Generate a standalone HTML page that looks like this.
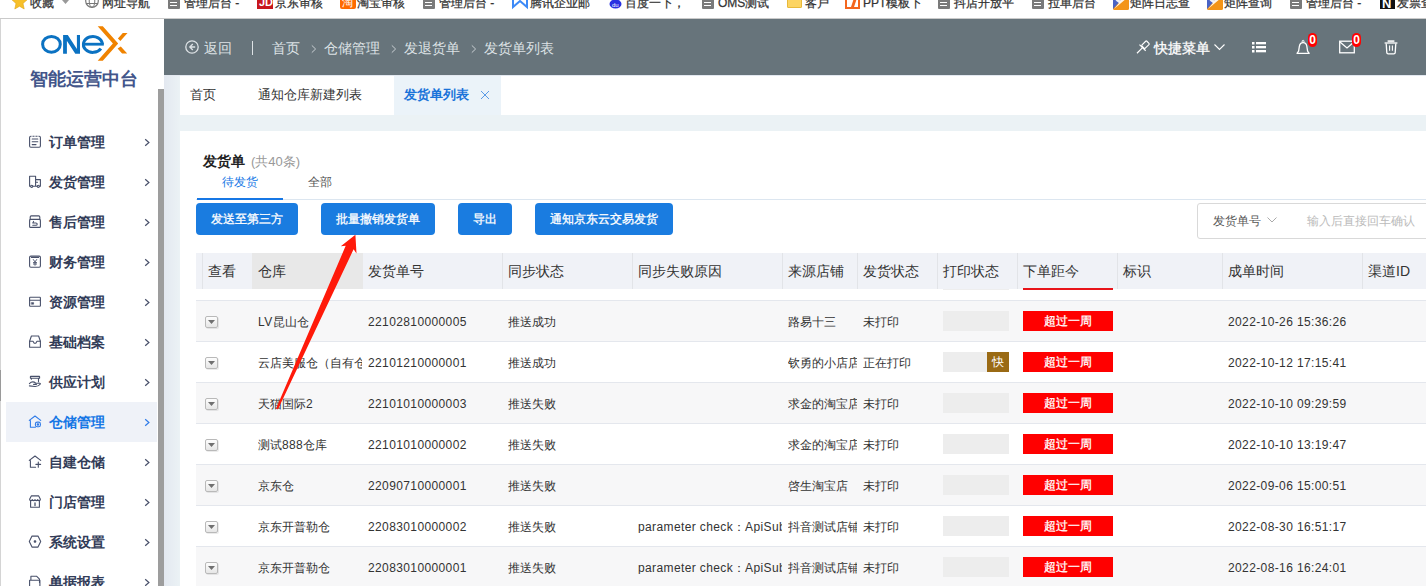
<!DOCTYPE html>
<html><head><meta charset="utf-8"><style>
*{margin:0;padding:0;box-sizing:border-box}
html,body{width:1426px;height:586px;overflow:hidden;background:#fff}
body{position:relative;font-family:"Liberation Sans", sans-serif;color:#333}
.ab{position:absolute}
.t{position:absolute;white-space:nowrap;line-height:1}
svg{position:absolute;overflow:visible}
</style></head><body>

<div class="ab" style="left:0;top:0;width:1426px;height:18px;background:#fff;overflow:hidden">
<svg style="left:12px;top:-6px" width="15" height="17" viewBox="0 0 15 17"><path d="M7.5 0 L9.8 5.2 L15 5.8 L11 9.5 L12.2 15 L7.5 12.2 L2.8 15 L4 9.5 L0 5.8 L5.2 5.2Z" fill="#f7c02a" stroke="#e0a210" stroke-width="0.6"/></svg>
<svg style="left:62px;top:0px" width="7" height="5" viewBox="0 0 7 5"><path d="M0 0 L7 0 L3.5 4Z" fill="#999"/></svg>
<div class="t" style="left:30px;top:-3px;font-size:12px;color:#333;-webkit-text-stroke:0.25px #333">收藏</div>
<svg style="left:85px;top:-6px" width="14" height="15" viewBox="0 0 14 15"><circle cx="7" cy="7" r="6.3" fill="none" stroke="#777" stroke-width="1.2"/><ellipse cx="7" cy="7" rx="2.8" ry="6.3" fill="none" stroke="#777" stroke-width="1"/><path d="M1 9.5H13" stroke="#777" stroke-width="1"/></svg>
<div class="t" style="left:102px;top:-3px;font-size:12px;color:#333;-webkit-text-stroke:0.25px #333">网址导航</div>
<div class="ab" style="left:168px;top:-6px;width:12px;height:15px;background:#7a7a7a;border-radius:1px"></div>
<div class="ab" style="left:170px;top:2px;width:7px;height:1.3px;background:#fff"></div>
<div class="ab" style="left:170px;top:5px;width:7px;height:1.3px;background:#fff"></div>
<div class="t" style="left:184px;top:-3px;font-size:12px;color:#333;-webkit-text-stroke:0.25px #333">管理后台 -</div>
<div class="ab" style="left:257px;top:-7px;width:16px;height:16px;background:#c8161d"></div>
<div class="t" style="left:259px;top:-3px;font-size:11px;font-weight:bold;color:#fff">JD</div>
<div class="t" style="left:275px;top:-3px;font-size:12px;color:#333;-webkit-text-stroke:0.25px #333">京东审核</div>
<div class="ab" style="left:340px;top:-7px;width:16px;height:16px;background:#ff6a00;border-radius:2px"></div>
<div class="t" style="left:342px;top:-3px;font-size:11px;color:#fff">淘</div>
<div class="t" style="left:357px;top:-3px;font-size:12px;color:#333;-webkit-text-stroke:0.25px #333">淘宝审核</div>
<div class="ab" style="left:423px;top:-6px;width:12px;height:15px;background:#7a7a7a;border-radius:1px"></div>
<div class="ab" style="left:425px;top:2px;width:7px;height:1.3px;background:#fff"></div>
<div class="ab" style="left:425px;top:5px;width:7px;height:1.3px;background:#fff"></div>
<div class="t" style="left:439px;top:-3px;font-size:12px;color:#333;-webkit-text-stroke:0.25px #333">管理后台 -</div>
<svg style="left:512px;top:-6px" width="16" height="15" viewBox="0 0 16 15"><path d="M1 1 L1 13 L8 7 L15 13 L15 1" fill="none" stroke="#3d8af7" stroke-width="2"/></svg>
<div class="t" style="left:530px;top:-3px;font-size:12px;color:#333;-webkit-text-stroke:0.25px #333">腾讯企业邮</div>
<svg style="left:609px;top:-6px" width="13" height="15" viewBox="0 0 13 15"><ellipse cx="6.5" cy="10" rx="6" ry="4.5" fill="#2932e1"/><circle cx="2" cy="3" r="1.8" fill="#2932e1"/><circle cx="5" cy="1" r="1.8" fill="#2932e1"/><circle cx="8" cy="1" r="1.8" fill="#2932e1"/><circle cx="11" cy="3" r="1.8" fill="#2932e1"/><text x="3" y="13" font-size="6" fill="#fff" font-family="Liberation Sans">du</text></svg>
<div class="t" style="left:625px;top:-3px;font-size:12px;color:#333;-webkit-text-stroke:0.25px #333">百度一下，</div>
<div class="ab" style="left:702px;top:-6px;width:12px;height:15px;background:#7a7a7a;border-radius:1px"></div>
<div class="ab" style="left:704px;top:2px;width:7px;height:1.3px;background:#fff"></div>
<div class="ab" style="left:704px;top:5px;width:7px;height:1.3px;background:#fff"></div>
<div class="t" style="left:718px;top:-3px;font-size:12px;color:#333;-webkit-text-stroke:0.25px #333">OMS测试</div>
<div class="ab" style="left:787px;top:-6px;width:15px;height:14px;background:#fcd462;border:1px solid #e8b93a;border-radius:1px"></div>
<div class="t" style="left:805px;top:-3px;font-size:12px;color:#333;-webkit-text-stroke:0.25px #333">客户</div>
<div class="ab" style="left:845px;top:-7px;width:15px;height:16px;background:#fff;border:2px solid #f4661e"></div>
<svg style="left:845px;top:-7px" width="15" height="16" viewBox="0 0 15 16"><path d="M6 14 L10 2 L13 2 L9 14Z" fill="#f4661e"/></svg>
<div class="t" style="left:863px;top:-3px;font-size:12px;color:#333;-webkit-text-stroke:0.25px #333">PPT模板下</div>
<div class="ab" style="left:938px;top:-6px;width:12px;height:15px;background:#7a7a7a;border-radius:1px"></div>
<div class="ab" style="left:940px;top:2px;width:7px;height:1.3px;background:#fff"></div>
<div class="ab" style="left:940px;top:5px;width:7px;height:1.3px;background:#fff"></div>
<div class="t" style="left:954px;top:-3px;font-size:12px;color:#333;-webkit-text-stroke:0.25px #333">抖店开放平</div>
<div class="ab" style="left:1032px;top:-6px;width:12px;height:15px;background:#7a7a7a;border-radius:1px"></div>
<div class="ab" style="left:1034px;top:2px;width:7px;height:1.3px;background:#fff"></div>
<div class="ab" style="left:1034px;top:5px;width:7px;height:1.3px;background:#fff"></div>
<div class="t" style="left:1048px;top:-3px;font-size:12px;color:#333;-webkit-text-stroke:0.25px #333">拉单后台</div>
<svg style="left:1113px;top:-5px" width="16" height="15" viewBox="0 0 16 15"><rect x="0" y="0" width="16" height="15" rx="1.5" fill="#f39418"/><path d="M0 0 H13 L0 14Z" fill="#4a63c4"/><path d="M2.5 5.5 L10 2 L6.5 5.5 L14 3 L1 14 L6 8Z" fill="#fff" opacity="0.9"/></svg>
<div class="t" style="left:1130px;top:-3px;font-size:12px;color:#333;-webkit-text-stroke:0.25px #333">矩阵日志查</div>
<svg style="left:1207px;top:-5px" width="16" height="15" viewBox="0 0 16 15"><rect x="0" y="0" width="16" height="15" rx="1.5" fill="#f39418"/><path d="M0 0 H13 L0 14Z" fill="#4a63c4"/><path d="M2.5 5.5 L10 2 L6.5 5.5 L14 3 L1 14 L6 8Z" fill="#fff" opacity="0.9"/></svg>
<div class="t" style="left:1224px;top:-3px;font-size:12px;color:#333;-webkit-text-stroke:0.25px #333">矩阵查询</div>
<div class="ab" style="left:1290px;top:-6px;width:12px;height:15px;background:#7a7a7a;border-radius:1px"></div>
<div class="ab" style="left:1292px;top:2px;width:7px;height:1.3px;background:#fff"></div>
<div class="ab" style="left:1292px;top:5px;width:7px;height:1.3px;background:#fff"></div>
<div class="t" style="left:1306px;top:-3px;font-size:12px;color:#333;-webkit-text-stroke:0.25px #333">管理后台 -</div>
<div class="ab" style="left:1380px;top:-6px;width:15px;height:15px;background:#111"></div>
<div class="t" style="left:1382px;top:-3px;font-size:13px;font-weight:bold;color:#fff">N</div>
<div class="t" style="left:1397px;top:-3px;font-size:12px;color:#333;-webkit-text-stroke:0.25px #333">发票查</div>
</div>
<div class="ab" style="left:0;top:18px;width:1426px;height:1px;background:#cacaca"></div>
<div class="ab" style="left:0;top:19px;width:164px;height:567px;background:#fff"></div>
<div class="ab" style="left:0;top:19px;width:1px;height:567px;background:#d4d4d4"></div>
<div class="ab" style="left:0;top:370px;width:1px;height:31px;background:#9a9a9a"></div>
<div class="ab" style="left:158px;top:89px;width:6px;height:497px;background:#9d9d9d"></div>
<svg style="left:0;top:0" width="164" height="100" viewBox="0 0 164 100">
<ellipse cx="51.45" cy="44.35" rx="8.85" ry="7.95" fill="none" stroke="#0b72c2" stroke-width="3"/>
<path d="M63.1 34.9 H66.9 V53.8 H63.1Z M76.9 34.9 H80 V53.8 H76.9Z M63.1 34.9 L67.8 34.9 L80 53.8 L75.3 53.8Z" fill="#0b72c2"/>
<path d="M102.3 44.2 A9.45 7.95 0 1 0 100.9 48.6" fill="none" stroke="#0b72c2" stroke-width="3"/>
<rect x="82" y="42.8" width="21.8" height="2.8" fill="#0b72c2"/>
<path d="M97.7 26.3 L102.8 26.3 L118.2 43.5 L102.8 60.7 L97.7 60.7 L112.9 43.5Z M122.8 33.1 L127.5 33.1 L120.4 41 L117.9 38.5Z M117.6 48.5 L120.8 46.4 L127.2 53.5 L122.1 53.5Z" fill="#f08300"/>
</svg>
<div class="t" style="left:30px;top:70px;font-size:18px;font-weight:bold;color:#42558a;letter-spacing:0px">智能运营中台</div>
<svg style="left:24px;top:132px" width="22" height="20" viewBox="0 0 22 20"><g fill="none" stroke="#48506a" stroke-width="1.1" stroke-linejoin="round" stroke-linecap="round"><rect x="5.6" y="4.3" width="10.8" height="11" rx="1.2"/><path d="M8.2 7H13.8 M8.2 9.8H13.8 M8.2 12.6H12"/><path d="M8 4.3V3.6 M11 4.3V3.6 M14 4.3V3.6" stroke="#fff" stroke-width="1.2"/></g></svg>
<div class="t" style="left:49px;top:135px;font-size:14px;font-weight:bold;color:#323c58">订单管理</div>
<svg style="left:144px;top:138px" width="6" height="9" viewBox="0 0 6 9"><path d="M1.2 1.2 L4.9 4.5 L1.2 7.8" fill="none" stroke="#48506a" stroke-width="1.2"/></svg>
<svg style="left:24px;top:172px" width="22" height="20" viewBox="0 0 22 20"><g fill="none" stroke="#48506a" stroke-width="1.1" stroke-linejoin="round" stroke-linecap="round"><path d="M5.6 14.2V4.3H11.6V14.2 M11.6 7.6H16.4V14.2 M11.6 10.3H13.5 M9 14.2H13 M5.6 14.2H6.4 M15.6 14.2H16.4"/><circle cx="7.7" cy="14.3" r="1.1"/><circle cx="14.3" cy="14.3" r="1.1"/></g></svg>
<div class="t" style="left:49px;top:175px;font-size:14px;font-weight:bold;color:#323c58">发货管理</div>
<svg style="left:144px;top:178px" width="6" height="9" viewBox="0 0 6 9"><path d="M1.2 1.2 L4.9 4.5 L1.2 7.8" fill="none" stroke="#48506a" stroke-width="1.2"/></svg>
<svg style="left:24px;top:212px" width="22" height="20" viewBox="0 0 22 20"><g fill="none" stroke="#48506a" stroke-width="1.1" stroke-linejoin="round" stroke-linecap="round"><path d="M6.2 7.4V5 Q6.2 3.9 7.3 3.9 H14.7 Q15.8 3.9 15.8 5 V7.4"/><rect x="5.6" y="7.4" width="10.8" height="8" rx="1"/><path d="M9.6 9.4 L8.8 11 H12 A1.1 1.1 0 0 1 12 13.3 H8.8"/></g></svg>
<div class="t" style="left:49px;top:215px;font-size:14px;font-weight:bold;color:#323c58">售后管理</div>
<svg style="left:144px;top:218px" width="6" height="9" viewBox="0 0 6 9"><path d="M1.2 1.2 L4.9 4.5 L1.2 7.8" fill="none" stroke="#48506a" stroke-width="1.2"/></svg>
<svg style="left:24px;top:252px" width="22" height="20" viewBox="0 0 22 20"><g fill="none" stroke="#48506a" stroke-width="1.1" stroke-linejoin="round" stroke-linecap="round"><rect x="5.6" y="4.1" width="10.8" height="11.2" rx="1.2"/><path d="M7.5 5.4H14.5"/><path d="M9.3 7.5 L11 9.9 L12.7 7.5 M11 9.9V13.3 M9.4 10.6H12.6 M9.4 12H12.6" stroke-width="0.9"/></g></svg>
<div class="t" style="left:49px;top:255px;font-size:14px;font-weight:bold;color:#323c58">财务管理</div>
<svg style="left:144px;top:258px" width="6" height="9" viewBox="0 0 6 9"><path d="M1.2 1.2 L4.9 4.5 L1.2 7.8" fill="none" stroke="#48506a" stroke-width="1.2"/></svg>
<svg style="left:24px;top:292px" width="22" height="20" viewBox="0 0 22 20"><g fill="none" stroke="#48506a" stroke-width="1.1" stroke-linejoin="round" stroke-linecap="round"><rect x="5.6" y="5.3" width="10.8" height="9" rx="0.6"/><path d="M5.6 8.2H16.4"/><rect x="7.6" y="10.6" width="2" height="1.6" fill="#48506a" stroke-width="0.6"/></g></svg>
<div class="t" style="left:49px;top:295px;font-size:14px;font-weight:bold;color:#323c58">资源管理</div>
<svg style="left:144px;top:298px" width="6" height="9" viewBox="0 0 6 9"><path d="M1.2 1.2 L4.9 4.5 L1.2 7.8" fill="none" stroke="#48506a" stroke-width="1.2"/></svg>
<svg style="left:24px;top:332px" width="22" height="20" viewBox="0 0 22 20"><g fill="none" stroke="#48506a" stroke-width="1.1" stroke-linejoin="round" stroke-linecap="round"><path d="M5.6 9.3 L7.4 4 H14.6 L16.4 9.3"/><path d="M5.6 9.3 V15.3 H16.4 V9.3 H13 L11.8 11.2 H10.2 L9 9.3Z"/></g></svg>
<div class="t" style="left:49px;top:335px;font-size:14px;font-weight:bold;color:#323c58">基础档案</div>
<svg style="left:144px;top:338px" width="6" height="9" viewBox="0 0 6 9"><path d="M1.2 1.2 L4.9 4.5 L1.2 7.8" fill="none" stroke="#48506a" stroke-width="1.2"/></svg>
<svg style="left:24px;top:372px" width="22" height="20" viewBox="0 0 22 20"><g fill="none" stroke="#48506a" stroke-width="1.1" stroke-linejoin="round" stroke-linecap="round"><rect x="6.4" y="4.4" width="9.2" height="1.8" rx="0.3"/><path d="M7.4 6.2V7.2 M14.5 6.2V9.6"/><path d="M5.4 11.6 Q8.5 8.5 11.8 11.2 H13.6 Q16.6 11 16.4 12 Q14.5 14.6 11 14.5 L5.4 13.9"/><path d="M9.6 12.4 H12.4"/></g></svg>
<div class="t" style="left:49px;top:375px;font-size:14px;font-weight:bold;color:#323c58">供应计划</div>
<svg style="left:144px;top:378px" width="6" height="9" viewBox="0 0 6 9"><path d="M1.2 1.2 L4.9 4.5 L1.2 7.8" fill="none" stroke="#48506a" stroke-width="1.2"/></svg>
<div class="ab" style="left:6px;top:402px;width:151px;height:40px;background:#eff2f8"></div>
<svg style="left:24px;top:412px" width="22" height="20" viewBox="0 0 22 20"><g fill="none" stroke="#2f7be8" stroke-width="1.1" stroke-linejoin="round" stroke-linecap="round"><path d="M5.3 8.4 L11 4 L16.7 8.4 M6.4 8.6 V15.2 H11.4"/><rect x="11.4" y="10.1" width="5" height="4.6" rx="1.8"/><circle cx="13.9" cy="12.4" r="0.7" fill="#2f7be8"/></g></svg>
<div class="t" style="left:49px;top:415px;font-size:14px;font-weight:bold;color:#1677e5">仓储管理</div>
<svg style="left:144px;top:418px" width="6" height="9" viewBox="0 0 6 9"><path d="M1.2 1.2 L4.9 4.5 L1.2 7.8" fill="none" stroke="#2f7be8" stroke-width="1.2"/></svg>
<svg style="left:24px;top:452px" width="22" height="20" viewBox="0 0 22 20"><g fill="none" stroke="#48506a" stroke-width="1.1" stroke-linejoin="round" stroke-linecap="round"><path d="M5.3 8.4 L11 4 L16.7 8.4 M6.4 8.6 V15.2 H11.6 M11.9 12.4 H16.6 M14.3 10 V15.2"/></g></svg>
<div class="t" style="left:49px;top:455px;font-size:14px;font-weight:bold;color:#323c58">自建仓储</div>
<svg style="left:144px;top:458px" width="6" height="9" viewBox="0 0 6 9"><path d="M1.2 1.2 L4.9 4.5 L1.2 7.8" fill="none" stroke="#48506a" stroke-width="1.2"/></svg>
<svg style="left:24px;top:492px" width="22" height="20" viewBox="0 0 22 20"><g fill="none" stroke="#48506a" stroke-width="1.1" stroke-linejoin="round" stroke-linecap="round"><path d="M7.3 3.9 H14.7 L16.4 7.3 Q16.4 8.6 15 8.6 Q13.7 8.6 13.7 7.6 Q13.7 8.6 12.3 8.6 Q11 8.6 11 7.6 Q11 8.6 9.7 8.6 Q8.3 8.6 8.3 7.6 Q8.3 8.6 7 8.6 Q5.6 8.6 5.6 7.3Z"/><path d="M6.6 8.8 V15.3 H15.4 V8.8"/><path d="M11 11 V13.6" stroke-width="1.3"/></g></svg>
<div class="t" style="left:49px;top:495px;font-size:14px;font-weight:bold;color:#323c58">门店管理</div>
<svg style="left:144px;top:498px" width="6" height="9" viewBox="0 0 6 9"><path d="M1.2 1.2 L4.9 4.5 L1.2 7.8" fill="none" stroke="#48506a" stroke-width="1.2"/></svg>
<svg style="left:24px;top:532px" width="22" height="20" viewBox="0 0 22 20"><g fill="none" stroke="#48506a" stroke-width="1.1" stroke-linejoin="round" stroke-linecap="round"><path d="M5.3 9.5 L8 4.1 H14 L16.7 9.5 L14 15.1 H8Z"/><circle cx="11" cy="9.5" r="0.8" fill="#48506a"/></g></svg>
<div class="t" style="left:49px;top:535px;font-size:14px;font-weight:bold;color:#323c58">系统设置</div>
<svg style="left:144px;top:538px" width="6" height="9" viewBox="0 0 6 9"><path d="M1.2 1.2 L4.9 4.5 L1.2 7.8" fill="none" stroke="#48506a" stroke-width="1.2"/></svg>
<svg style="left:24px;top:572px" width="22" height="20" viewBox="0 0 22 20"><g fill="none" stroke="#48506a" stroke-width="1.1" stroke-linejoin="round" stroke-linecap="round"><path d="M6.9 8 V4.2 H12.5 L15.5 7.2 V10.5 M5.6 14 V8.2 H15.9 V16"/></g></svg>
<div class="t" style="left:49px;top:575px;font-size:14px;font-weight:bold;color:#323c58">单据报表</div>
<svg style="left:144px;top:578px" width="6" height="9" viewBox="0 0 6 9"><path d="M1.2 1.2 L4.9 4.5 L1.2 7.8" fill="none" stroke="#48506a" stroke-width="1.2"/></svg>
<div class="ab" style="left:164px;top:19px;width:1262px;height:56px;background:#67747b"></div>
<svg style="left:185px;top:40px" width="14" height="14" viewBox="0 0 14 14"><circle cx="7" cy="7" r="6.2" fill="none" stroke="#dde2e5" stroke-width="1.3"/><path d="M7.8 4 L4.8 7 L7.8 10 M4.8 7 H10.2" fill="none" stroke="#dde2e5" stroke-width="1.3"/></svg>
<div class="t" style="left:204px;top:41px;font-size:14px;color:#dde2e5">返回</div>
<div class="ab" style="left:251.5px;top:41px;width:1.5px;height:14px;background:#dde2e5"></div>
<div class="t" style="left:272px;top:41px;font-size:14px;color:#dde2e5">首页</div>
<div class="t" style="left:324px;top:41px;font-size:14px;color:#dde2e5">仓储管理</div>
<div class="t" style="left:404px;top:41px;font-size:14px;color:#dde2e5">发退货单</div>
<div class="t" style="left:484px;top:41px;font-size:14px;color:#dde2e5">发货单列表</div>
<svg style="left:311px;top:45px" width="6" height="9" viewBox="0 0 6 9"><path d="M0.8 0.4 L4.6 4 L0.8 7.6" fill="none" stroke="#c9cfd3" stroke-width="1"/></svg>
<svg style="left:391px;top:45px" width="6" height="9" viewBox="0 0 6 9"><path d="M0.8 0.4 L4.6 4 L0.8 7.6" fill="none" stroke="#c9cfd3" stroke-width="1"/></svg>
<svg style="left:471px;top:45px" width="6" height="9" viewBox="0 0 6 9"><path d="M0.8 0.4 L4.6 4 L0.8 7.6" fill="none" stroke="#c9cfd3" stroke-width="1"/></svg>
<svg style="left:1134px;top:39px" width="17" height="17" viewBox="0 0 17 17"><g transform="translate(1.2 1.4) scale(0.86) rotate(45 8.5 8.5)" fill="none" stroke="#ffffff" stroke-width="1.35"><rect x="5.8" y="-0.4" width="5.4" height="8" rx="1"/><path d="M3.4 8.4 H13.6 M8.5 8.4 V17.6"/></g></svg>
<div class="t" style="left:1154px;top:41px;font-size:14px;color:#ffffff;-webkit-text-stroke:0.3px #ffffff">快捷菜单</div>
<svg style="left:1214px;top:44px" width="11" height="7" viewBox="0 0 11 7"><path d="M0.5 0.5 L5.5 5.5 L10.5 0.5" fill="none" stroke="#ffffff" stroke-width="1.1"/></svg>
<svg style="left:1252px;top:41px" width="14" height="12" viewBox="0 0 14 12"><rect x="0" y="1" width="2.5" height="2.5" fill="#ffffff"/><rect x="0" y="5" width="2.5" height="2.5" fill="#ffffff"/><rect x="0" y="9" width="2.5" height="2.5" fill="#ffffff"/><rect x="4" y="1" width="10" height="2.3" fill="#ffffff"/><rect x="4" y="5" width="10" height="2.3" fill="#ffffff"/><rect x="4" y="9" width="10" height="2.3" fill="#ffffff"/></svg>
<svg style="left:1296px;top:40px" width="15" height="15" viewBox="0 0 15 15"><path d="M1 13.3 L2.6 11.2 L3.4 6.2 Q4 2.6 7.1 2.6 Q10.2 2.6 10.8 6.2 L11.6 11.2 L13.2 13.3 Z" fill="none" stroke="#ffffff" stroke-width="1.3" stroke-linejoin="round"/><circle cx="7.1" cy="1.3" r="1" fill="none" stroke="#ffffff" stroke-width="0.9"/></svg>
<div class="ab" style="left:1308px;top:33px;width:9px;height:14px;background:#f00;border-radius:4.5px;color:#fff;font-size:12px;font-weight:bold;line-height:14px;text-align:center">0</div>
<svg style="left:1339px;top:40px" width="16" height="14" viewBox="0 0 16 14"><rect x="0.7" y="1.2" width="14.6" height="11.6" fill="none" stroke="#ffffff" stroke-width="1.3"/><path d="M1 2 L8 8 L15 2" fill="none" stroke="#ffffff" stroke-width="1.3"/></svg>
<div class="ab" style="left:1352px;top:33px;width:9px;height:14px;background:#f00;border-radius:4.5px;color:#fff;font-size:12px;font-weight:bold;line-height:14px;text-align:center">0</div>
<svg style="left:1384px;top:40px" width="14" height="15" viewBox="0 0 14 15"><path d="M0.6 3 H13.4" stroke="#ffffff" stroke-width="1.3"/><rect x="3.6" y="0.2" width="6.8" height="2" fill="#ffffff" opacity="0.85"/><path d="M2.2 3.5 L2.8 12.6 Q2.9 13.8 4.2 13.8 H9.8 Q11.1 13.8 11.2 12.6 L11.8 3.5" fill="none" stroke="#ffffff" stroke-width="1.3"/><path d="M5.6 5.6 V10.8 M8.4 5.6 V10.8" stroke="#ffffff" stroke-width="1.1"/></svg>
<div class="ab" style="left:164px;top:75px;width:1262px;height:511px;background:#ebf2f5"></div>
<div class="ab" style="left:164px;top:75px;width:16px;height:511px;background:linear-gradient(to right,#e3e8f0,#ebf2f5)"></div>
<div class="ab" style="left:180px;top:75px;width:1246px;height:40px;background:#fff"></div>
<div class="ab" style="left:394px;top:75px;width:107px;height:40px;background:#ebf3f9"></div>
<div class="t" style="left:190px;top:88px;font-size:13px;color:#333">首页</div>
<div class="t" style="left:258px;top:88px;font-size:13px;color:#333">通知仓库新建列表</div>
<div class="t" style="left:404px;top:88px;font-size:13px;color:#1a73d9;font-weight:bold">发货单列表</div>
<svg style="left:480px;top:90px" width="10" height="10" viewBox="0 0 10 10"><path d="M1 1 L9 9 M9 1 L1 9" stroke="#5a9be6" stroke-width="1"/></svg>
<div class="ab" style="left:164px;top:75px;width:1262px;height:1px;background:#e3e8f0"></div>
<div class="ab" style="left:180px;top:131px;width:1246px;height:455px;background:#fff"></div>
<div class="t" style="left:203px;top:154px;font-size:14px;font-weight:bold;color:#222">发货单</div>
<div class="t" style="left:251px;top:155px;font-size:13px;color:#999">(共40条)</div>
<div class="t" style="left:222px;top:176px;font-size:12px;color:#1677e5">待发货</div>
<div class="t" style="left:308px;top:176px;font-size:12px;color:#555">全部</div>
<div class="ab" style="left:196px;top:199px;width:1230px;height:1px;background:#dce6f0"></div>
<div class="ab" style="left:197px;top:198px;width:86px;height:2px;background:#1677e5"></div>
<div class="ab" style="left:196px;top:203px;width:102px;height:32px;background:#1a7ce0;border-radius:4px;color:#fff;font-size:12px;line-height:33px;text-align:center;white-space:nowrap;-webkit-text-stroke:0.3px #fff">发送至第三方</div>
<div class="ab" style="left:321px;top:203px;width:114px;height:32px;background:#1a7ce0;border-radius:4px;color:#fff;font-size:12px;line-height:33px;text-align:center;white-space:nowrap;-webkit-text-stroke:0.3px #fff">批量撤销发货单</div>
<div class="ab" style="left:458px;top:203px;width:54px;height:32px;background:#1a7ce0;border-radius:4px;color:#fff;font-size:12px;line-height:33px;text-align:center;white-space:nowrap;-webkit-text-stroke:0.3px #fff">导出</div>
<div class="ab" style="left:535px;top:203px;width:138px;height:32px;background:#1a7ce0;border-radius:4px;color:#fff;font-size:12px;line-height:33px;text-align:center;white-space:nowrap;-webkit-text-stroke:0.3px #fff">通知京东云交易发货</div>
<div class="ab" style="left:1197px;top:203px;width:260px;height:36px;border:1px solid #d9d9d9;border-radius:3px;background:#fff"></div>
<div class="t" style="left:1213px;top:215px;font-size:12px;color:#555">发货单号</div>
<svg style="left:1267px;top:217px" width="10" height="6" viewBox="0 0 10 6"><path d="M0.5 0.5 L5 5 L9.5 0.5" fill="none" stroke="#aaa" stroke-width="1"/></svg>
<div class="t" style="left:1307px;top:215px;font-size:12px;color:#bbb">输入后直接回车确认</div>
<div class="ab" style="left:196px;top:253px;width:1230px;height:36px;background:#f0f2f7"></div>
<div class="ab" style="left:252px;top:253px;width:111px;height:36px;background:#e8e8e8"></div>
<div class="ab" style="left:202px;top:253px;width:1px;height:36px;background:#e2e4e8"></div>
<div class="ab" style="left:502px;top:253px;width:1px;height:36px;background:#e2e4e8"></div>
<div class="ab" style="left:632px;top:253px;width:1px;height:36px;background:#e2e4e8"></div>
<div class="ab" style="left:782px;top:253px;width:1px;height:36px;background:#e2e4e8"></div>
<div class="ab" style="left:857px;top:253px;width:1px;height:36px;background:#e2e4e8"></div>
<div class="ab" style="left:937px;top:253px;width:1px;height:36px;background:#e2e4e8"></div>
<div class="ab" style="left:1017px;top:253px;width:1px;height:36px;background:#e2e4e8"></div>
<div class="ab" style="left:1117px;top:253px;width:1px;height:36px;background:#e2e4e8"></div>
<div class="ab" style="left:1222px;top:253px;width:1px;height:36px;background:#e2e4e8"></div>
<div class="ab" style="left:1362px;top:253px;width:1px;height:36px;background:#e2e4e8"></div>
<div class="t" style="left:208px;top:264px;font-size:14px;color:#333">查看</div>
<div class="t" style="left:258px;top:264px;font-size:14px;color:#333">仓库</div>
<div class="t" style="left:368px;top:264px;font-size:14px;color:#333">发货单号</div>
<div class="t" style="left:508px;top:264px;font-size:14px;color:#333">同步状态</div>
<div class="t" style="left:638px;top:264px;font-size:14px;color:#333">同步失败原因</div>
<div class="t" style="left:788px;top:264px;font-size:14px;color:#333">来源店铺</div>
<div class="t" style="left:863px;top:264px;font-size:14px;color:#333">发货状态</div>
<div class="t" style="left:943px;top:264px;font-size:14px;color:#333">打印状态</div>
<div class="t" style="left:1023px;top:264px;font-size:14px;color:#333">下单距今</div>
<div class="t" style="left:1123px;top:264px;font-size:14px;color:#333">标识</div>
<div class="t" style="left:1228px;top:264px;font-size:14px;color:#333">成单时间</div>
<div class="t" style="left:1368px;top:264px;font-size:14px;color:#333">渠道ID</div>
<div class="ab" style="left:943px;top:289px;width:66px;height:1px;background:#eeeeee"></div>
<div class="ab" style="left:1023px;top:288px;width:90px;height:2px;background:#e8141a"></div>
<div class="ab" style="left:196px;top:300px;width:1230px;height:41px;background:#f7f7f8;border-top:1px solid #e4e7ed"></div>
<div class="ab" style="left:205px;top:316px;width:13px;height:12px;border:1px solid #b9b9b9;border-radius:2px;background:linear-gradient(#fdfdfd,#e6e6e6);box-shadow:1px 1px 0 rgba(0,0,0,0.08)"></div>
<svg style="left:208px;top:320px" width="7" height="4" viewBox="0 0 7 4"><path d="M0 0H7L3.5 4Z" fill="#707070"/></svg>
<div class="t" style="left:258px;top:316px;width:104px;overflow:hidden;font-size:12px;color:#333"><span style="letter-spacing:0.38px">LV</span>昆山仓</div>
<div class="t" style="left:368px;top:316px;width:134px;overflow:hidden;font-size:12px;color:#333"><span style="letter-spacing:0.38px">22102810000005</span></div>
<div class="t" style="left:508px;top:316px;width:124px;overflow:hidden;font-size:12px;color:#333">推送成功</div>
<div class="t" style="left:638px;top:316px;width:144px;overflow:hidden;font-size:12px;color:#333"></div>
<div class="t" style="left:788px;top:316px;width:69px;overflow:hidden;font-size:12px;color:#333">路易十三</div>
<div class="t" style="left:863px;top:316px;width:74px;overflow:hidden;font-size:12px;color:#333">未打印</div>
<div class="t" style="left:1228px;top:316px;width:133px;overflow:hidden;font-size:12px;color:#333"><span style="letter-spacing:0.38px">2022-10-26 15:36:26</span></div>
<div class="ab" style="left:943px;top:311px;width:66px;height:20px;background:#ededed"></div>
<div class="ab" style="left:1023px;top:311px;width:90px;height:20px;background:#ff0000;color:#fff;font-size:12px;line-height:21px;text-align:center;-webkit-text-stroke:0.3px #fff">超过一周</div>
<div class="ab" style="left:196px;top:341px;width:1230px;height:41px;background:#ffffff;border-top:1px solid #e4e7ed"></div>
<div class="ab" style="left:205px;top:357px;width:13px;height:12px;border:1px solid #b9b9b9;border-radius:2px;background:linear-gradient(#fdfdfd,#e6e6e6);box-shadow:1px 1px 0 rgba(0,0,0,0.08)"></div>
<svg style="left:208px;top:361px" width="7" height="4" viewBox="0 0 7 4"><path d="M0 0H7L3.5 4Z" fill="#707070"/></svg>
<div class="t" style="left:258px;top:357px;width:104px;overflow:hidden;font-size:12px;color:#333">云店美服仓（自有仓库）</div>
<div class="t" style="left:368px;top:357px;width:134px;overflow:hidden;font-size:12px;color:#333"><span style="letter-spacing:0.38px">22101210000001</span></div>
<div class="t" style="left:508px;top:357px;width:124px;overflow:hidden;font-size:12px;color:#333">推送成功</div>
<div class="t" style="left:638px;top:357px;width:144px;overflow:hidden;font-size:12px;color:#333"></div>
<div class="t" style="left:788px;top:357px;width:69px;overflow:hidden;font-size:12px;color:#333">钦勇的小店店铺</div>
<div class="t" style="left:863px;top:357px;width:74px;overflow:hidden;font-size:12px;color:#333">正在打印</div>
<div class="t" style="left:1228px;top:357px;width:133px;overflow:hidden;font-size:12px;color:#333"><span style="letter-spacing:0.38px">2022-10-12 17:15:41</span></div>
<div class="ab" style="left:943px;top:352px;width:66px;height:20px;background:#ededed"></div>
<div class="ab" style="left:987px;top:352px;width:22px;height:20px;background:#9a6a14;color:#fff;font-size:12px;line-height:21px;text-align:center">快</div>
<div class="ab" style="left:1023px;top:352px;width:90px;height:20px;background:#ff0000;color:#fff;font-size:12px;line-height:21px;text-align:center;-webkit-text-stroke:0.3px #fff">超过一周</div>
<div class="ab" style="left:196px;top:382px;width:1230px;height:41px;background:#f7f7f8;border-top:1px solid #e4e7ed"></div>
<div class="ab" style="left:205px;top:398px;width:13px;height:12px;border:1px solid #b9b9b9;border-radius:2px;background:linear-gradient(#fdfdfd,#e6e6e6);box-shadow:1px 1px 0 rgba(0,0,0,0.08)"></div>
<svg style="left:208px;top:402px" width="7" height="4" viewBox="0 0 7 4"><path d="M0 0H7L3.5 4Z" fill="#707070"/></svg>
<div class="t" style="left:258px;top:398px;width:104px;overflow:hidden;font-size:12px;color:#333">天猫国际<span style="letter-spacing:0.38px">2</span></div>
<div class="t" style="left:368px;top:398px;width:134px;overflow:hidden;font-size:12px;color:#333"><span style="letter-spacing:0.38px">22101010000003</span></div>
<div class="t" style="left:508px;top:398px;width:124px;overflow:hidden;font-size:12px;color:#333">推送失败</div>
<div class="t" style="left:638px;top:398px;width:144px;overflow:hidden;font-size:12px;color:#333"></div>
<div class="t" style="left:788px;top:398px;width:69px;overflow:hidden;font-size:12px;color:#333">求金的淘宝店铺</div>
<div class="t" style="left:863px;top:398px;width:74px;overflow:hidden;font-size:12px;color:#333">未打印</div>
<div class="t" style="left:1228px;top:398px;width:133px;overflow:hidden;font-size:12px;color:#333"><span style="letter-spacing:0.38px">2022-10-10 09:29:59</span></div>
<div class="ab" style="left:943px;top:393px;width:66px;height:20px;background:#ededed"></div>
<div class="ab" style="left:1023px;top:393px;width:90px;height:20px;background:#ff0000;color:#fff;font-size:12px;line-height:21px;text-align:center;-webkit-text-stroke:0.3px #fff">超过一周</div>
<div class="ab" style="left:196px;top:423px;width:1230px;height:41px;background:#ffffff;border-top:1px solid #e4e7ed"></div>
<div class="ab" style="left:205px;top:439px;width:13px;height:12px;border:1px solid #b9b9b9;border-radius:2px;background:linear-gradient(#fdfdfd,#e6e6e6);box-shadow:1px 1px 0 rgba(0,0,0,0.08)"></div>
<svg style="left:208px;top:443px" width="7" height="4" viewBox="0 0 7 4"><path d="M0 0H7L3.5 4Z" fill="#707070"/></svg>
<div class="t" style="left:258px;top:439px;width:104px;overflow:hidden;font-size:12px;color:#333">测试<span style="letter-spacing:0.38px">888</span>仓库</div>
<div class="t" style="left:368px;top:439px;width:134px;overflow:hidden;font-size:12px;color:#333"><span style="letter-spacing:0.38px">22101010000002</span></div>
<div class="t" style="left:508px;top:439px;width:124px;overflow:hidden;font-size:12px;color:#333">推送失败</div>
<div class="t" style="left:638px;top:439px;width:144px;overflow:hidden;font-size:12px;color:#333"></div>
<div class="t" style="left:788px;top:439px;width:69px;overflow:hidden;font-size:12px;color:#333">求金的淘宝店铺</div>
<div class="t" style="left:863px;top:439px;width:74px;overflow:hidden;font-size:12px;color:#333">未打印</div>
<div class="t" style="left:1228px;top:439px;width:133px;overflow:hidden;font-size:12px;color:#333"><span style="letter-spacing:0.38px">2022-10-10 13:19:47</span></div>
<div class="ab" style="left:943px;top:434px;width:66px;height:20px;background:#ededed"></div>
<div class="ab" style="left:1023px;top:434px;width:90px;height:20px;background:#ff0000;color:#fff;font-size:12px;line-height:21px;text-align:center;-webkit-text-stroke:0.3px #fff">超过一周</div>
<div class="ab" style="left:196px;top:464px;width:1230px;height:41px;background:#f7f7f8;border-top:1px solid #e4e7ed"></div>
<div class="ab" style="left:205px;top:480px;width:13px;height:12px;border:1px solid #b9b9b9;border-radius:2px;background:linear-gradient(#fdfdfd,#e6e6e6);box-shadow:1px 1px 0 rgba(0,0,0,0.08)"></div>
<svg style="left:208px;top:484px" width="7" height="4" viewBox="0 0 7 4"><path d="M0 0H7L3.5 4Z" fill="#707070"/></svg>
<div class="t" style="left:258px;top:480px;width:104px;overflow:hidden;font-size:12px;color:#333">京东仓</div>
<div class="t" style="left:368px;top:480px;width:134px;overflow:hidden;font-size:12px;color:#333"><span style="letter-spacing:0.38px">22090710000001</span></div>
<div class="t" style="left:508px;top:480px;width:124px;overflow:hidden;font-size:12px;color:#333">推送失败</div>
<div class="t" style="left:638px;top:480px;width:144px;overflow:hidden;font-size:12px;color:#333"></div>
<div class="t" style="left:788px;top:480px;width:69px;overflow:hidden;font-size:12px;color:#333">啓生淘宝店</div>
<div class="t" style="left:863px;top:480px;width:74px;overflow:hidden;font-size:12px;color:#333">未打印</div>
<div class="t" style="left:1228px;top:480px;width:133px;overflow:hidden;font-size:12px;color:#333"><span style="letter-spacing:0.38px">2022-09-06 15:00:51</span></div>
<div class="ab" style="left:943px;top:475px;width:66px;height:20px;background:#ededed"></div>
<div class="ab" style="left:1023px;top:475px;width:90px;height:20px;background:#ff0000;color:#fff;font-size:12px;line-height:21px;text-align:center;-webkit-text-stroke:0.3px #fff">超过一周</div>
<div class="ab" style="left:196px;top:505px;width:1230px;height:41px;background:#ffffff;border-top:1px solid #e4e7ed"></div>
<div class="ab" style="left:205px;top:521px;width:13px;height:12px;border:1px solid #b9b9b9;border-radius:2px;background:linear-gradient(#fdfdfd,#e6e6e6);box-shadow:1px 1px 0 rgba(0,0,0,0.08)"></div>
<svg style="left:208px;top:525px" width="7" height="4" viewBox="0 0 7 4"><path d="M0 0H7L3.5 4Z" fill="#707070"/></svg>
<div class="t" style="left:258px;top:521px;width:104px;overflow:hidden;font-size:12px;color:#333">京东开普勒仓</div>
<div class="t" style="left:368px;top:521px;width:134px;overflow:hidden;font-size:12px;color:#333"><span style="letter-spacing:0.38px">22083010000002</span></div>
<div class="t" style="left:508px;top:521px;width:124px;overflow:hidden;font-size:12px;color:#333">推送失败</div>
<div class="t" style="left:638px;top:521px;width:144px;overflow:hidden;font-size:12px;color:#333"><span style="letter-spacing:0.38px">parameter check</span>：<span style="letter-spacing:0.38px">ApiSubmit</span></div>
<div class="t" style="left:788px;top:521px;width:69px;overflow:hidden;font-size:12px;color:#333">抖音测试店铺</div>
<div class="t" style="left:863px;top:521px;width:74px;overflow:hidden;font-size:12px;color:#333">未打印</div>
<div class="t" style="left:1228px;top:521px;width:133px;overflow:hidden;font-size:12px;color:#333"><span style="letter-spacing:0.38px">2022-08-30 16:51:17</span></div>
<div class="ab" style="left:943px;top:516px;width:66px;height:20px;background:#ededed"></div>
<div class="ab" style="left:1023px;top:516px;width:90px;height:20px;background:#ff0000;color:#fff;font-size:12px;line-height:21px;text-align:center;-webkit-text-stroke:0.3px #fff">超过一周</div>
<div class="ab" style="left:196px;top:546px;width:1230px;height:41px;background:#f7f7f8;border-top:1px solid #e4e7ed"></div>
<div class="ab" style="left:205px;top:562px;width:13px;height:12px;border:1px solid #b9b9b9;border-radius:2px;background:linear-gradient(#fdfdfd,#e6e6e6);box-shadow:1px 1px 0 rgba(0,0,0,0.08)"></div>
<svg style="left:208px;top:566px" width="7" height="4" viewBox="0 0 7 4"><path d="M0 0H7L3.5 4Z" fill="#707070"/></svg>
<div class="t" style="left:258px;top:562px;width:104px;overflow:hidden;font-size:12px;color:#333">京东开普勒仓</div>
<div class="t" style="left:368px;top:562px;width:134px;overflow:hidden;font-size:12px;color:#333"><span style="letter-spacing:0.38px">22083010000001</span></div>
<div class="t" style="left:508px;top:562px;width:124px;overflow:hidden;font-size:12px;color:#333">推送失败</div>
<div class="t" style="left:638px;top:562px;width:144px;overflow:hidden;font-size:12px;color:#333"><span style="letter-spacing:0.38px">parameter check</span>：<span style="letter-spacing:0.38px">ApiSubmit</span></div>
<div class="t" style="left:788px;top:562px;width:69px;overflow:hidden;font-size:12px;color:#333">抖音测试店铺</div>
<div class="t" style="left:863px;top:562px;width:74px;overflow:hidden;font-size:12px;color:#333">未打印</div>
<div class="t" style="left:1228px;top:562px;width:133px;overflow:hidden;font-size:12px;color:#333"><span style="letter-spacing:0.38px">2022-08-16 16:24:01</span></div>
<div class="ab" style="left:943px;top:557px;width:66px;height:20px;background:#ededed"></div>
<div class="ab" style="left:1023px;top:557px;width:90px;height:20px;background:#ff0000;color:#fff;font-size:12px;line-height:21px;text-align:center;-webkit-text-stroke:0.3px #fff">超过一周</div>
<svg style="left:0;top:0" width="1426" height="586" viewBox="0 0 1426 586"><path d="M277.9 409.4 L353.6 249.3 L356.5 253.4 L355.4 234.8 L340.8 246.3 L345.7 245.8 L276.1 408.6Z" fill="#ff1a0a"/></svg>
</body></html>
